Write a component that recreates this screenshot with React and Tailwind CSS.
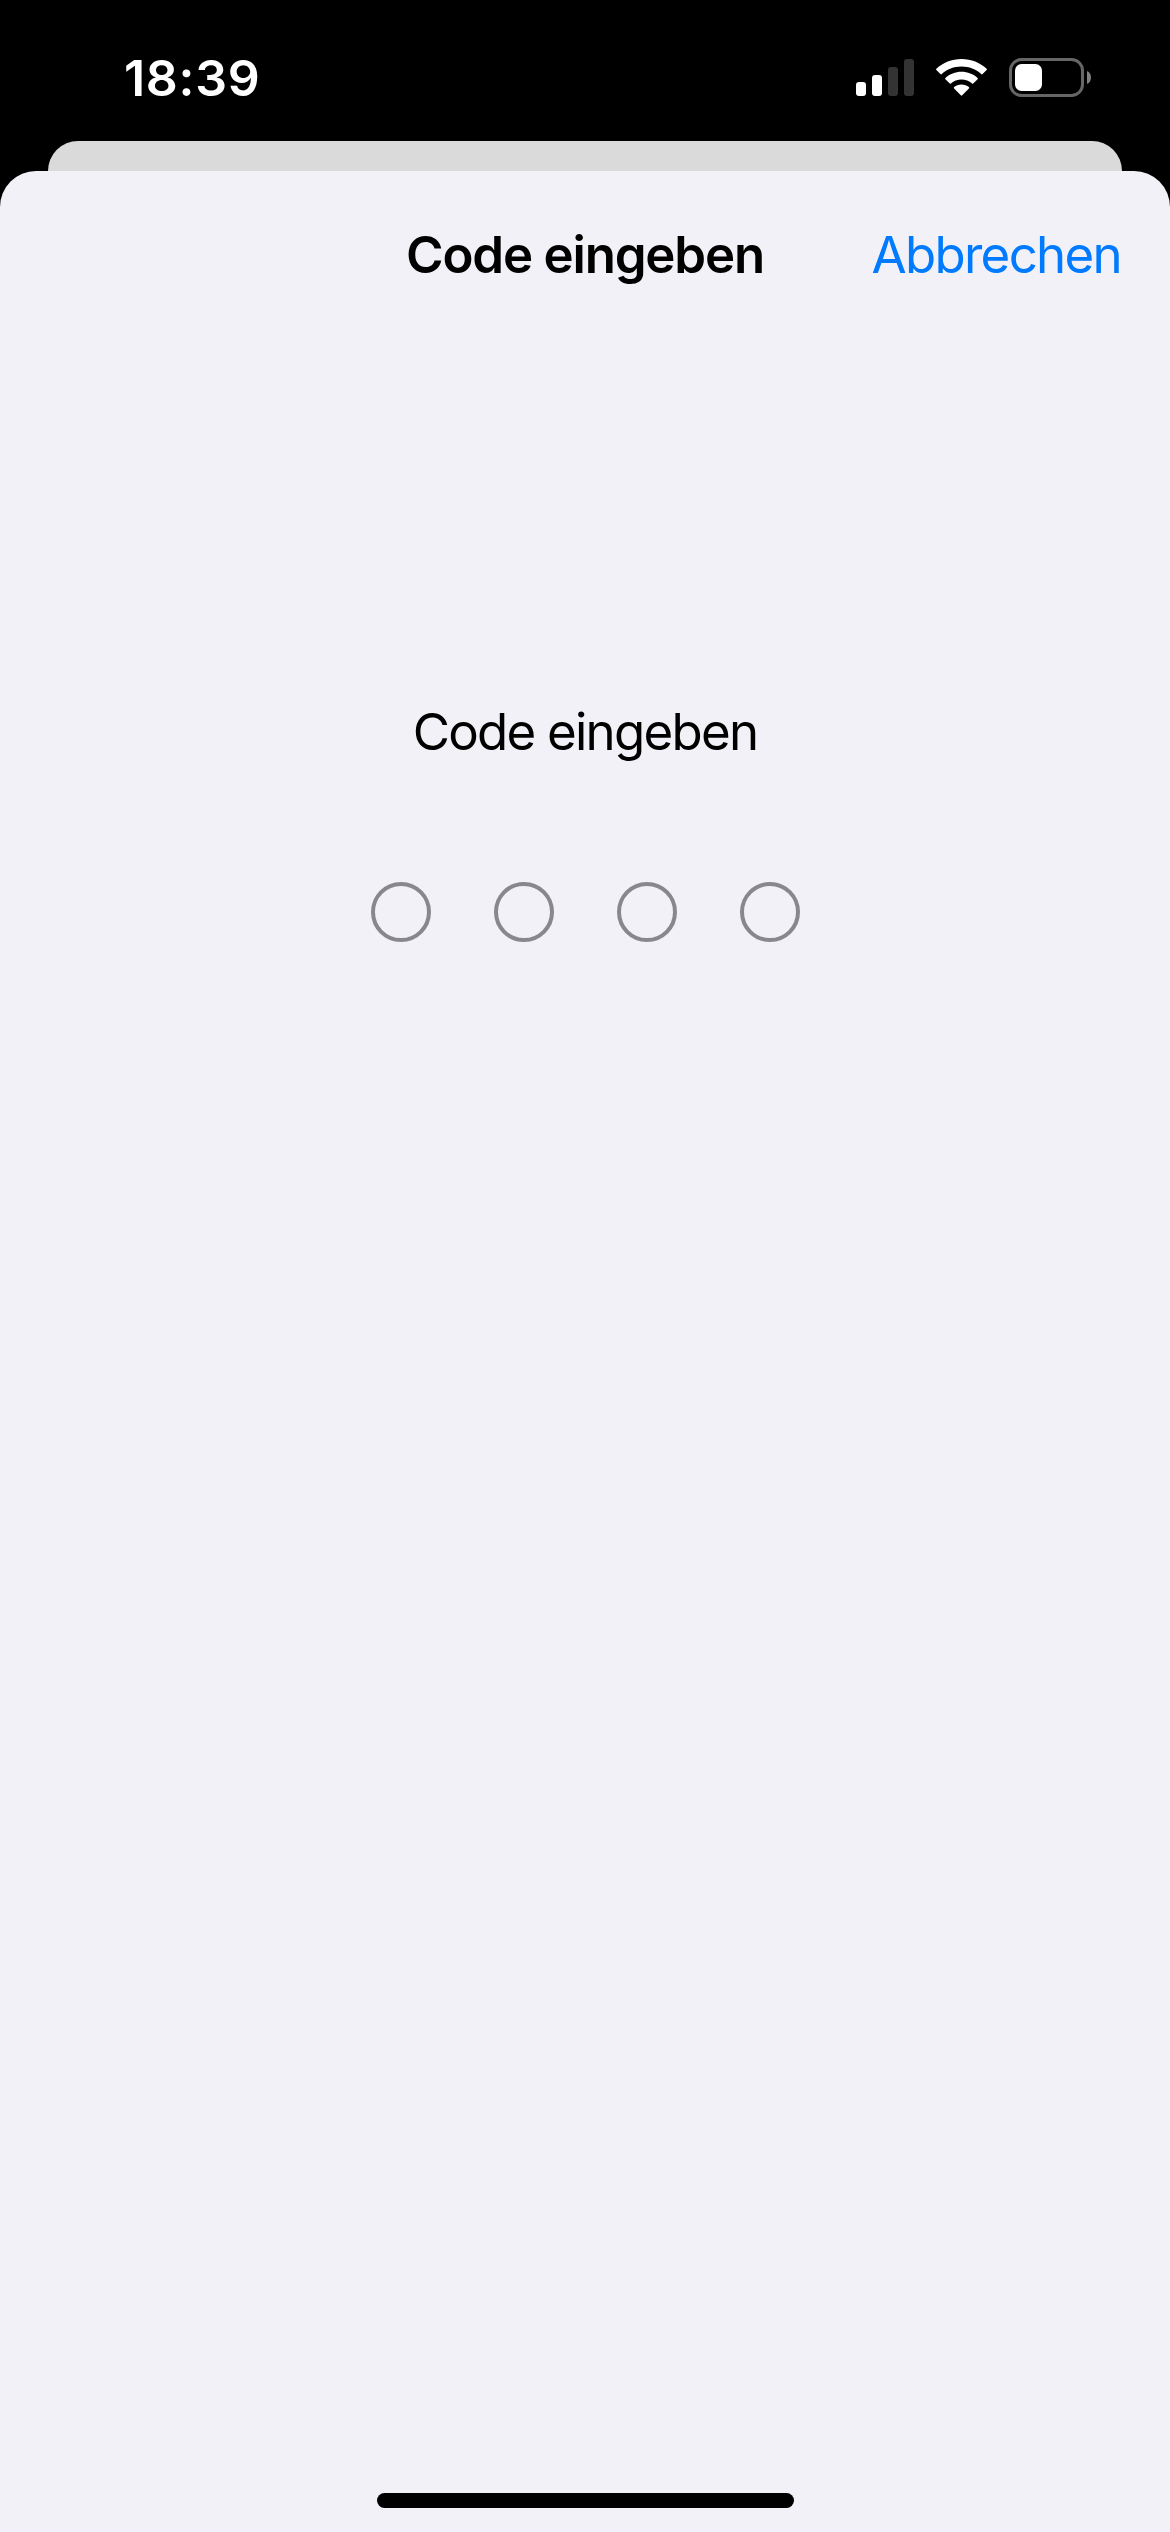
const CODE_LENGTH = 4;

const SignalIcon = () => (
  <svg width="58" height="37" viewBox="0 0 58 37" aria-hidden="true">
    <rect x="0" y="23" width="10" height="14" rx="3" fill="#fff" />
    <rect x="16" y="16" width="10" height="21" rx="3" fill="#fff" />
    <rect x="32" y="8" width="10" height="29" rx="3" fill="#333" />
    <rect x="48" y="0" width="10" height="37" rx="3" fill="#333" />
  </svg>
);

const WifiIcon = () => (
  <svg width="51" height="37" viewBox="0 0 51 37" fill="#fff" aria-hidden="true">
    <path d="M25.5 0C35.3 0 44 3.7 50.6 9.7Q51.3 10.4 50.6 11.1L46.6 15.1Q45.9 15.8 45.2 15.1C40 10.3 33.1 7.6 25.5 7.6S11 10.3 5.8 15.1Q5.1 15.8 4.4 15.1L.4 11.1Q-.3 10.4 .4 9.7C7 3.7 15.7 0 25.5 0Z" />
    <path d="M25.5 12.8C31.7 12.8 37.3 15.1 41.6 18.9Q42.3 19.6 41.6 20.3L37.5 24.3Q36.8 25 36.1 24.4C33.2 21.9 29.5 20.4 25.5 20.4S17.8 21.9 14.9 24.4Q14.2 25 13.5 24.3L9.4 20.3Q8.7 19.6 9.4 18.9C13.7 15.1 19.3 12.8 25.5 12.8Z" />
    <path d="M25.5 25.4C28.3 25.4 30.9 26.4 32.9 28.1Q33.6 28.8 32.9 29.5L26.2 36.3Q25.5 37 24.8 36.3L18.1 29.5Q17.4 28.8 18.1 28.1C20.1 26.4 22.7 25.4 25.5 25.4Z" />
  </svg>
);

const BatteryIcon = () => (
  <svg width="82" height="39" viewBox="0 0 82 39" aria-hidden="true">
    <rect x="1.5" y="1.5" width="72" height="36" rx="11" fill="none" stroke="#666" strokeWidth="3" />
    <rect x="6" y="6" width="27" height="27" rx="6.5" fill="#fff" />
    <path d="M78 13C80.6 14.1 82 16.7 82 19.5S80.6 24.9 78 26Z" fill="#808080" />
  </svg>
);

const StatusBar = () => (
  <div className="flex h-[141px] items-start justify-between pl-[124px] pr-[79px] text-white">
    <span className="mt-[48px] text-[50px] leading-[60px] font-semibold tracking-[0.7px]">
      18:39
    </span>
    <div className="mt-[58px] flex h-[39px] items-center">
      <SignalIcon />
      <div className="ml-[22px]">
        <WifiIcon />
      </div>
      <div className="ml-[22px]">
        <BatteryIcon />
      </div>
    </div>
  </div>
);

const SheetHeader = ({ title, action }) => (
  <header className="grid h-[168px] grid-cols-[1fr_auto_1fr] items-center px-12">
    <h1 className="col-start-2 text-[51px] leading-[60px] font-semibold tracking-[-1.2px]">
      {title}
    </h1>
    <button className="mr-px justify-self-end text-[51px] leading-[60px] tracking-[-1.7px] text-[#007aff]">
      {action}
    </button>
  </header>
);

const CodeDots = () => (
  <div className="mt-[120px] flex justify-center gap-[63px]">
    {Array.from({ length: CODE_LENGTH }, (_, i) => (
      <span key={i} className="size-[60px] rounded-full border-4 border-[#88878c]" />
    ))}
  </div>
);

export default function App() {
  return (
    <div className="flex h-[2532px] w-[1170px] flex-col overflow-hidden bg-black font-['Inter',sans-serif] text-black">
      <StatusBar />

      {/* Card behind the sheet */}
      <div className="mx-12 h-[30px] rounded-t-[30px] bg-[#dadada]" />

      <main className="flex flex-1 flex-col rounded-t-[36px] bg-[#f2f1f7]">
        <SheetHeader title="Code eingeben" action="Abbrechen" />
        <p className="mt-[363px] text-center text-[51px] leading-[60px] tracking-[-1.75px]">
          Code eingeben
        </p>
        <CodeDots />
        <div className="mx-auto mt-auto mb-6 h-[15px] w-[417px] rounded-full bg-black" />
      </main>
    </div>
  );
}
